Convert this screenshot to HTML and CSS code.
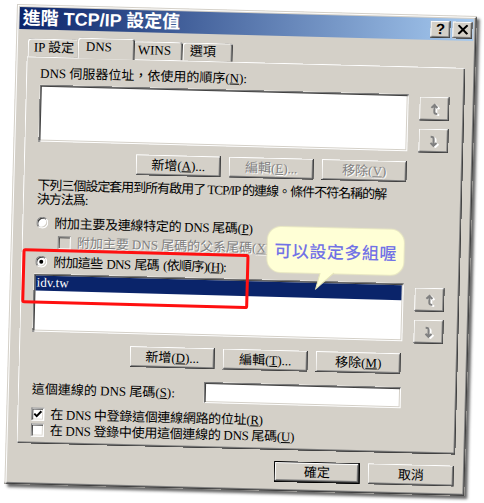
FILE: index.html
```html
<!DOCTYPE html>
<html lang="zh-Hant">
<head>
<meta charset="utf-8">
<title>進階 TCP/IP 設定值</title>
<link rel="stylesheet" href="styles.css">
</head>
<body>
<div class="stage">
  <div class="dialog">
    <div class="titlebar">
      <span class="title">進階 TCP/IP 設定值</span>
      <div class="tbtns">
        <span class="tbtn help">?</span>
        <span class="tbtn"><svg width="11" height="10" viewBox="0 0 11 10"><path d="M1 0.5 L10 9.5 M10 0.5 L1 9.5" stroke="#000" stroke-width="2"/></svg></span>
      </div>
    </div>

    <div class="tabs">
      <div class="tab t1">IP 設定</div>
      <div class="tab t2 sel">DNS</div>
      <div class="tab t3">WINS</div>
      <div class="tab t4">選項</div>
    </div>

    <div class="panel">
      <div class="lbl">DNS 伺服器位址，依使用的順序(<u>N</u>):</div>
      <div class="listrow">
        <div class="listbox l1"></div>
        <div class="arrows a1">
          <span class="abtn"><svg width="12" height="13" viewBox="0 0 12 13"><g fill="none" stroke-width="2"><path d="M7 2 V9 Q7 11 10 11 M4 5 L7 2 L10 5" stroke="#fff" transform="translate(1 1)"/><path d="M6 2 V9 Q6 11 9 11 M3 5 L6 2 L9 5" stroke="#808080"/></g></svg></span>
          <span class="abtn"><svg width="12" height="13" viewBox="0 0 12 13"><g fill="none" stroke-width="2"><path d="M4 2 Q7 2 7 4 V11 M4 8 L7 11 L10 8" stroke="#fff" transform="translate(1 1)"/><path d="M3 2 Q6 2 6 4 V11 M3 8 L6 11 L9 8" stroke="#808080"/></g></svg></span>
        </div>
      </div>
      <div class="btnrow r1">
        <span class="btn">新增(<u>A</u>)...</span>
        <span class="btn dis">編輯(<u>E</u>)...</span>
        <span class="btn dis">移除(<u>V</u>)</span>
      </div>
      <p class="desc">下列三個設定套用到所有啟用了 TCP/IP 的連線。條件不符名稱的解<br>決方法爲:</p>
      <div class="opt o1"><span class="rb"></span>附加主要及連線特定的 DNS 尾碼(<u>P</u>)</div>
      <div class="opt o2 dis"><span class="cb off"></span>附加主要 DNS 尾碼的父系尾碼(<u>X</u>)</div>
      <div class="opt o3"><span class="rb on"></span>附加這些 DNS 尾碼 (依順序)(<u>H</u>):</div>
      <div class="listrow lr2">
        <div class="listbox l2"><div class="item">idv.tw</div></div>
        <div class="arrows a2">
          <span class="abtn"><svg width="12" height="13" viewBox="0 0 12 13"><g fill="none" stroke-width="2"><path d="M7 2 V9 Q7 11 10 11 M4 5 L7 2 L10 5" stroke="#fff" transform="translate(1 1)"/><path d="M6 2 V9 Q6 11 9 11 M3 5 L6 2 L9 5" stroke="#808080"/></g></svg></span>
          <span class="abtn"><svg width="12" height="13" viewBox="0 0 12 13"><g fill="none" stroke-width="2"><path d="M4 2 Q7 2 7 4 V11 M4 8 L7 11 L10 8" stroke="#fff" transform="translate(1 1)"/><path d="M3 2 Q6 2 6 4 V11 M3 8 L6 11 L9 8" stroke="#808080"/></g></svg></span>
        </div>
      </div>
      <div class="btnrow r2">
        <span class="btn">新增(<u>D</u>)...</span>
        <span class="btn">編輯(<u>T</u>)...</span>
        <span class="btn">移除(<u>M</u>)</span>
      </div>
      <div class="suffix">
        <span>這個連線的 DNS 尾碼(<u>S</u>):</span>
        <div class="textbox"></div>
      </div>
      <div class="opt o4"><span class="cb"><svg width="9" height="9" viewBox="0 0 9 9"><path d="M1 4 L3.5 6.5 L8 1.5" fill="none" stroke="#000" stroke-width="2"/></svg></span>在 DNS 中登錄這個連線網路的位址(<u>R</u>)</div>
      <div class="opt o5"><span class="cb"></span>在 DNS 登錄中使用這個連線的 DNS 尾碼(<u>U</u>)</div>
    </div>

    <div class="footer">
      <span class="btn big default">確定</span>
      <span class="btn big">取消</span>
    </div>

    <div class="redbox"></div>
    <div class="bubble">可以設定多組喔<svg class="tail" width="24" height="18" viewBox="0 0 24 18"><path d="M6 0 L20 0 L2 17 Z" fill="#ffffd6"/><path d="M20 0.5 L2 17 L6 1" fill="none" stroke="#e4e4b8" stroke-width="1"/></svg></div>
  </div>
</div>
</body>
</html>
```

FILE: styles.css
```css
* { box-sizing: border-box; }
html, body { margin: 0; padding: 0; background: #fff; }
body {
  width: 484px; height: 503px; overflow: hidden;
  font-family: "Liberation Serif", "Noto Sans CJK TC", serif;
  font-size: 13px; color: #000;
}
u { text-decoration: underline; text-underline-offset: 1px; }

.stage { padding: 4px 0 0 17px; }

.dialog {
  position: relative;
  width: 460px; height: 480px;
  padding: 3px;
  background: #d4d0c8;
  transform: rotate(1.5deg);
  transform-origin: 0 0;
  box-shadow:
    inset 1px 1px 0 #d4d0c8, inset -1px -1px 0 #404040,
    inset 2px 2px 0 #fff, inset -2px -2px 0 #808080,
    3px 3px 3px rgba(0,0,0,.6);
}

.titlebar {
  height: 22px;
  display: flex; align-items: center; justify-content: space-between;
  padding: 0 1px 0 3px;
  background: linear-gradient(to right, #0a246a, #a6caf0);
}
.title {
  color: #fff;
  font: bold 18px/22px "Liberation Sans", "Noto Sans CJK TC", sans-serif;
}
.tbtns { display: flex; gap: 2px; }
.tbtn {
  width: 20px; height: 17px;
  display: flex; align-items: center; justify-content: center;
  background: #d4d0c8;
  box-shadow: inset -1px -1px 0 #404040, inset 1px 1px 0 #fff, inset -2px -2px 0 #808080;
}
.tbtn.help { font: bold 15px/17px "Liberation Sans", sans-serif; padding-bottom: 1px; }

.tabs {
  position: relative; z-index: 1;
  display: flex; align-items: flex-end;
  height: 20px; margin: 7px 0 0 9px;
}
.tab {
  height: 18px; line-height: 17px;
  padding-left: 6px;
  background: #d4d0c8;
  border-radius: 3px 3px 0 0;
  box-shadow: inset 1px 1px 0 #fff, inset -1px 0 0 #404040, inset -2px 0 0 #808080;
}
.t1 { width: 52px; }
.t2 { width: 53px; }
.t3 { width: 50px; padding-left: 5px; }
.t4 { width: 50px; padding-left: 7px; }
.tab.sel {
  height: 21px; width: 57px; margin: 0 -2px -1px; padding-left: 8px; line-height: 18px;
  position: relative; z-index: 2;
}

.panel {
  margin-left: 8px;
  width: 439px; height: 387px;
  padding: 9px 0 0 14px;
  box-shadow: inset 1px 1px 0 #fff, inset -1px -1px 0 #404040, inset -2px -2px 0 #808080;
}
.lbl { line-height: 15px; height: 15px; }

.listrow { display: flex; margin-top: 4px; }
.listbox {
  width: 369px; height: 57px;
  background: #fff;
  padding: 2px;
  box-shadow: inset 1px 1px 0 #808080, inset -1px -1px 0 #fff, inset 2px 2px 0 #404040, inset -2px -2px 0 #d4d0c8;
}
.listbox.l2 { height: 58px; width: 370px; margin-left: -1px; }
.item {
  height: 15px; line-height: 14px; padding-left: 1px;
  background: #0a246a; color: #fff;
}
.arrows { display: flex; flex-direction: column; gap: 8px; margin-left: 11px; }
.a1 { padding-top: 2px; }
.a2 { padding-top: 4px; }
.abtn {
  width: 30px; height: 24px;
  display: flex; align-items: center; justify-content: center;
  background: #d4d0c8;
  box-shadow: inset -1px -1px 0 #404040, inset 1px 1px 0 #fff, inset -2px -2px 0 #808080;
}

.btnrow { display: flex; justify-content: flex-end; gap: 8px; width: 369px; }
.r1 { margin-top: 9px; }
.r2 { margin-top: 10px; width: 368px; }
.btn {
  width: 85px; height: 21px;
  display: flex; align-items: center; justify-content: center;
  line-height: 15px;
  background: #d4d0c8;
  box-shadow: inset -1px -1px 0 #404040, inset 1px 1px 0 #fff, inset -2px -2px 0 #808080;
}
.btn.dis, .opt.dis { color: #808080; text-shadow: 1px 1px 0 #fff; }

.desc { margin: 6px 0 0; line-height: 14px; white-space: nowrap; letter-spacing: -1px; }

.opt { display: flex; align-items: center; height: 16px; line-height: 15px; white-space: pre; }
.o1 { margin-top: 8px; letter-spacing: -0.3px; }
.o2 { margin-top: 3px; padding-left: 22px; }
.o3 { margin-top: 4px; letter-spacing: -0.7px; word-spacing: 1.5px; }
.o4 { margin-top: 7px; letter-spacing: -0.3px; }
.o5 { margin-top: 0; letter-spacing: -0.3px; }

.rb {
  width: 12px; height: 12px; margin-right: 6px; flex: none;
  border-radius: 50%;
  background: #fff;
  border: 1px solid; border-color: #808080 #fff #fff #808080;
  box-shadow: inset 1px 1px 0 #404040, inset -1px -1px 0 #d4d0c8;
  display: flex; align-items: center; justify-content: center;
}
.rb.on::after {
  content: ""; width: 4px; height: 4px; border-radius: 50%; background: #000;
}
.cb {
  width: 13px; height: 13px; margin-right: 6px; flex: none;
  background: #fff;
  border: 1px solid; border-color: #808080 #fff #fff #808080;
  box-shadow: inset 1px 1px 0 #404040, inset -1px -1px 0 #d4d0c8;
  display: flex; align-items: center; justify-content: center;
}
.cb.off { background: #d4d0c8; }

.suffix {
  display: flex; align-items: center; justify-content: space-between;
  width: 369px; height: 21px; margin-top: 13px;
}
.textbox {
  width: 197px; height: 21px; background: #fff;
  box-shadow: inset 1px 1px 0 #808080, inset -1px -1px 0 #fff, inset 2px 2px 0 #404040, inset -2px -2px 0 #d4d0c8;
}

.footer {
  display: flex; justify-content: flex-end; gap: 8px;
  margin-top: 11px; padding-right: 8px;
}
.btn.big { width: 86px; }
.btn.default {
  box-shadow: inset 0 0 0 1px #000, inset -2px -2px 0 #404040, inset 2px 2px 0 #fff, inset -3px -3px 0 #808080;
}

.redbox {
  position: absolute; left: 12px; top: 244px;
  width: 227px; height: 55px;
  border: 3px solid #ff1010; border-radius: 3px;
}
.bubble {
  position: absolute; left: 257px; top: 216px;
  width: 136px; height: 45px;
  border-radius: 13px;
  background: #ffffd6;
  box-shadow: 0 0 1px 1px #ecebc4;
  display: flex; align-items: center; justify-content: center;
  font: 500 17px/20px "Noto Sans CJK TC", sans-serif;
  color: #7272e6;
  letter-spacing: 0.5px;
}
.tail { position: absolute; left: 47px; top: 44px; }
```
